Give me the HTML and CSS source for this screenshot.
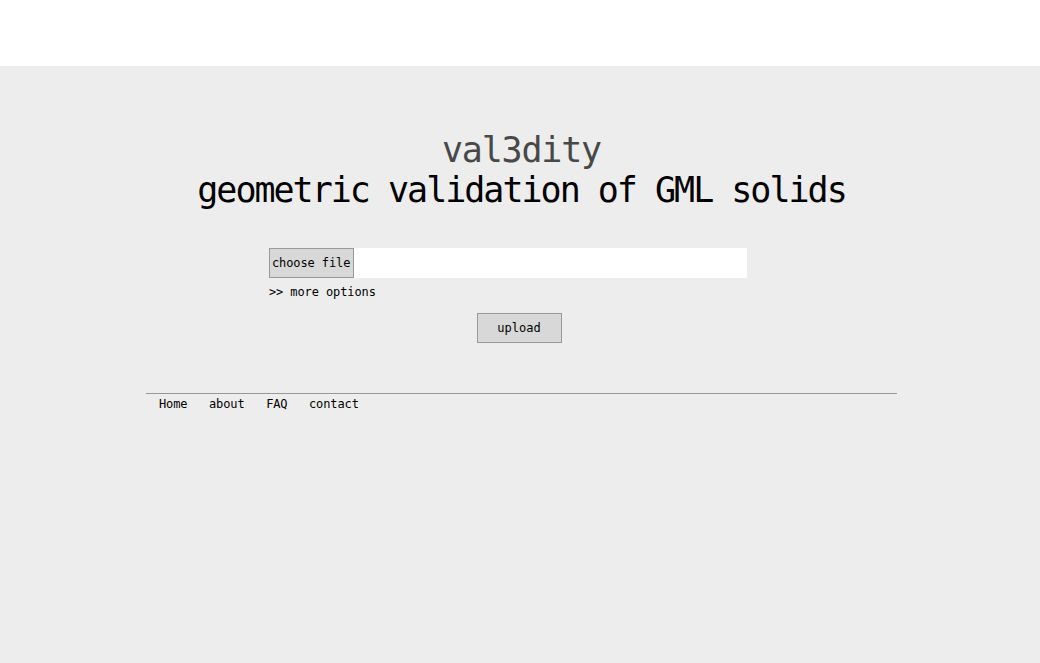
FILE: index.html
```html
<!DOCTYPE html>
<html>
<head>
<meta charset="utf-8">
<title>val3dity</title>
<link rel="stylesheet" href="styles.css">
</head>
<body>
<div class="topbar"></div>
<div class="main">
  <div class="container">
    <h1 class="title">
      <span class="title-name">val3dity</span>
      <span class="title-sub">geometric validation of GML solids</span>
    </h1>
    <form class="upload-form">
      <div class="file-row">
        <span class="file-btn">choose file</span>
        <span class="file-name"></span>
      </div>
      <div class="more">&gt;&gt; more options</div>
    </form>
    <div class="submit-row">
      <span class="submit-btn">upload</span>
    </div>
    <nav class="footer-nav">
      <a href="#">Home</a>
      <a href="#">about</a>
      <a href="#">FAQ</a>
      <a href="#">contact</a>
    </nav>
  </div>
</div>
</body>
</html>
```

FILE: styles.css
```css
html, body {
  margin: 0;
  padding: 0;
}
body {
  font-family: "DejaVu Sans Mono", "Liberation Mono", monospace;
  color: #000;
  background: #ededed;
}
.topbar {
  height: 66px;
  background: #ffffff;
}
.main {
  background: #ededed;
  min-height: 597px;
  padding-top: 64px;
  box-sizing: border-box;
}
.container {
  width: 751px;
  margin-left: calc(50% - 374px);
}
.title {
  margin: 0;
  font-weight: normal;
  font-size: 35px;
  letter-spacing: -2px;
  line-height: 40px;
  text-align: center;
}
.title span {
  display: block;
}
.title-name {
  color: #484848;
  letter-spacing: -1.2px;
}
.title-sub {
  color: #000;
}
.upload-form {
  margin: 38px 0 0 123px;
  width: 478px;
  font-size: 12px;
}
.file-row {
  display: flex;
  height: 30px;
  background: #fff;
}
.file-btn {
  display: flex;
  align-items: center;
  padding: 0 2px;
  background: #d8d8d8;
  border: 1px solid #999;
  box-sizing: border-box;
  width: 85px;
  height: 30px;
  white-space: nowrap;
  letter-spacing: -0.1px;
}
.file-name {
  flex: 1;
}
.more {
  margin-top: 6px;
  line-height: 16px;
  letter-spacing: -0.1px;
}
.submit-row {
  display: flex;
  justify-content: center;
  padding-right: 5px;
  margin-top: 13px;
}
.submit-btn {
  width: 85px;
  height: 30px;
  box-sizing: border-box;
  border: 1px solid #999;
  background: #d8d8d8;
  font-size: 12px;
  display: flex;
  align-items: center;
  justify-content: center;
  padding-bottom: 1px;
}
.footer-nav {
  margin-top: 50px;
  border-top: 1px solid #999;
  padding: 2px 0 0 13px;
  display: flex;
  gap: 21.5px;
  font-size: 12px;
  line-height: 16px;
}
.footer-nav a {
  color: #000;
  text-decoration: none;
  letter-spacing: -0.1px;
}
```
